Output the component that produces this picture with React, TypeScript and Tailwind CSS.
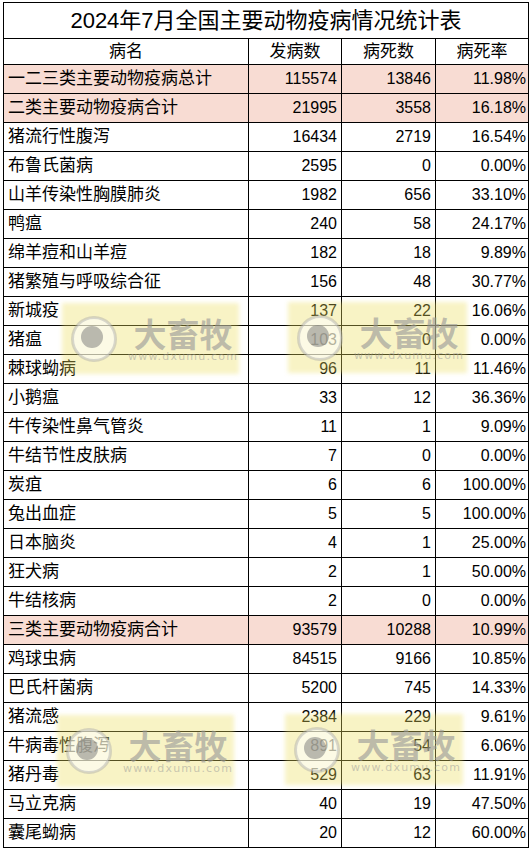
import React from "react";

type Row = { name: string; cases: string; deaths: string; rate: string; hl?: boolean };

const ROWS: Row[] = [
  { name: "一二三类主要动物疫病总计", cases: "115574", deaths: "13846", rate: "11.98%", hl: true },
  { name: "二类主要动物疫病合计", cases: "21995", deaths: "3558", rate: "16.18%", hl: true },
  { name: "猪流行性腹泻", cases: "16434", deaths: "2719", rate: "16.54%" },
  { name: "布鲁氏菌病", cases: "2595", deaths: "0", rate: "0.00%" },
  { name: "山羊传染性胸膜肺炎", cases: "1982", deaths: "656", rate: "33.10%" },
  { name: "鸭瘟", cases: "240", deaths: "58", rate: "24.17%" },
  { name: "绵羊痘和山羊痘", cases: "182", deaths: "18", rate: "9.89%" },
  { name: "猪繁殖与呼吸综合征", cases: "156", deaths: "48", rate: "30.77%" },
  { name: "新城疫", cases: "137", deaths: "22", rate: "16.06%" },
  { name: "猪瘟", cases: "103", deaths: "0", rate: "0.00%" },
  { name: "棘球蚴病", cases: "96", deaths: "11", rate: "11.46%" },
  { name: "小鹅瘟", cases: "33", deaths: "12", rate: "36.36%" },
  { name: "牛传染性鼻气管炎", cases: "11", deaths: "1", rate: "9.09%" },
  { name: "牛结节性皮肤病", cases: "7", deaths: "0", rate: "0.00%" },
  { name: "炭疽", cases: "6", deaths: "6", rate: "100.00%" },
  { name: "兔出血症", cases: "5", deaths: "5", rate: "100.00%" },
  { name: "日本脑炎", cases: "4", deaths: "1", rate: "25.00%" },
  { name: "狂犬病", cases: "2", deaths: "1", rate: "50.00%" },
  { name: "牛结核病", cases: "2", deaths: "0", rate: "0.00%" },
  { name: "三类主要动物疫病合计", cases: "93579", deaths: "10288", rate: "10.99%", hl: true },
  { name: "鸡球虫病", cases: "84515", deaths: "9166", rate: "10.85%" },
  { name: "巴氏杆菌病", cases: "5200", deaths: "745", rate: "14.33%" },
  { name: "猪流感", cases: "2384", deaths: "229", rate: "9.61%" },
  { name: "牛病毒性腹泻", cases: "891", deaths: "54", rate: "6.06%" },
  { name: "猪丹毒", cases: "529", deaths: "63", rate: "11.91%" },
  { name: "马立克病", cases: "40", deaths: "19", rate: "47.50%" },
  { name: "囊尾蚴病", cases: "20", deaths: "12", rate: "60.00%" },
];

// 水印：大畜牧 logo，半透明叠在表格上
function Watermark({ className }: { className: string }) {
  return (
    <div className={`pointer-events-none absolute ${className}`}>
      <div className="absolute inset-0 bg-[rgba(236,222,95,0.36)] blur-[2px]" />
      <div className="relative flex h-full items-center pl-[8px]">
        <svg width="48" height="48" viewBox="0 0 48 48" className="shrink-0">
          <circle cx="24" cy="24" r="21.5" fill="rgba(255,255,255,0.55)" stroke="rgba(170,170,170,0.45)" strokeWidth="3" />
          <circle cx="22" cy="22" r="11" fill="rgba(120,120,120,0.5)" />
        </svg>
        <div className="ml-[10px] flex flex-col items-center">
          <span className="text-[33px] leading-[36px] font-bold text-[rgba(150,150,150,0.6)] [font-family:'Noto_Sans_CJK_SC',sans-serif]">
            大畜牧
          </span>
          <span className="text-[11px] leading-[12px] tracking-[1.2px] text-[rgba(150,150,150,0.5)] [font-family:'DejaVu_Sans',sans-serif]">
            www.dxumu.com
          </span>
        </div>
      </div>
    </div>
  );
}

export default function App() {
  const cell = "border border-black px-[4px]";
  return (
    <div className="relative h-[850px] w-[530px] overflow-hidden bg-white text-black [font-family:'Liberation_Sans','Noto_Sans_CJK_SC',sans-serif]">
      <table className="ml-[3px] mt-[2px] w-[525px] table-fixed border-collapse">
        <colgroup>
          <col className="w-[245px]" />
          <col className="w-[93px]" />
          <col className="w-[94px]" />
          <col className="w-[93px]" />
        </colgroup>
        <thead>
          <tr className="h-[36px]">
            <th colSpan={4} className={`${cell} text-center text-[22px] font-normal`}>
              2024年7月全国主要动物疫病情况统计表
            </th>
          </tr>
          <tr className="h-[26px]">
            <th className={`${cell} text-center text-[17px] leading-[20px] font-normal`}>病名</th>
            <th className={`${cell} text-center text-[17px] leading-[20px] font-normal`}>发病数</th>
            <th className={`${cell} text-center text-[17px] leading-[20px] font-normal`}>病死数</th>
            <th className={`${cell} text-center text-[17px] leading-[20px] font-normal`}>病死率</th>
          </tr>
        </thead>
        <tbody>
          {ROWS.map((r) => (
            <tr key={r.name} className={`h-[29px] ${r.hl ? "bg-[#f8dcd3]" : ""}`}>
              <td className={`${cell} whitespace-nowrap text-left text-[17px] leading-[20px]`}>{r.name}</td>
              <td className={`${cell} text-right text-[16px] leading-[20px]`}>{r.cases}</td>
              <td className={`${cell} text-right text-[16px] leading-[20px]`}>{r.deaths}</td>
              <td className={`${cell} pr-[2px] text-right text-[16px] leading-[20px]`}>{r.rate}</td>
            </tr>
          ))}
        </tbody>
      </table>

      <Watermark className="left-[62px] top-[303px] h-[71px] w-[177px]" />
      <Watermark className="left-[288px] top-[302px] h-[71px] w-[179px]" />
      <Watermark className="left-[57px] top-[715px] h-[72px] w-[177px]" />
      <Watermark className="left-[285px] top-[714px] h-[71px] w-[178px]" />
    </div>
  );
}
